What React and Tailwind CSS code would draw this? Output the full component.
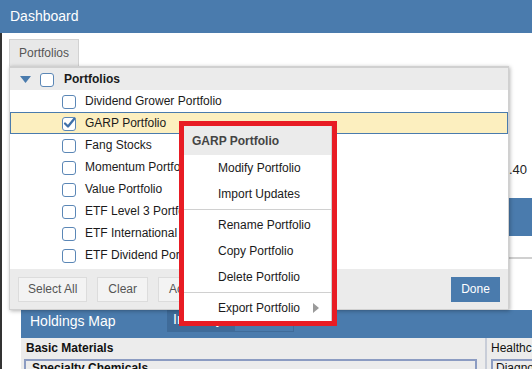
import React from "react";

const portfolios = [
  "Dividend Grower Portfolio",
  "GARP Portfolio",
  "Fang Stocks",
  "Momentum Portfolio",
  "Value Portfolio",
  "ETF Level 3 Portfolio",
  "ETF International Portfolio",
  "ETF Dividend Portfolio",
];

function Box({ checked }) {
  return (
    <svg width="15" height="15" viewBox="0 0 15 15" className="shrink-0">
      <rect x="0.5" y="1.5" width="13" height="13" rx="2.5" fill="#fff" stroke="#5b87b6" />
      {checked && (
        <path d="M3 7.5 L6 10.5 L12.5 2.5" fill="none" stroke="#3f70a8" strokeWidth="2.3" strokeLinecap="round" strokeLinejoin="round" />
      )}
    </svg>
  );
}

function MenuItem({ label, arrow }) {
  return (
    <div className="h-[26px] flex items-center pl-[34px] pr-[12px] text-[12px] text-[#1a1a1a]">
      <span className="flex-1">{label}</span>
      {arrow && (
        <svg width="6" height="10" viewBox="0 0 6 10">
          <polygon points="0,0 6,5 0,10" fill="#9a9a9a" />
        </svg>
      )}
    </div>
  );
}

export default function App() {
  return (
    <div className="relative w-[532px] h-[369px] overflow-hidden bg-white font-['Liberation_Sans',Arial,sans-serif]">
      {/* Header */}
      <div className="h-[33px] bg-[#4a7bad] flex items-center px-[10px] text-white text-[14px]">
        Dashboard
      </div>

      <div className="border-l-2 border-[#333]">
        {/* Tab */}
        <div className="pt-[6px] pl-[7px]">
          <div className="w-[70px] h-[27px] bg-[#e8e8e8] border border-b-0 border-[#d2d2d2] flex items-center justify-center text-[12px] text-[#555]">
            Portfolios
          </div>
        </div>

        {/* Background dashboard */}
        <div className="pl-[19px]">
          <div className="h-[132px] pt-[97px] pr-[5px] text-right text-[13px] leading-[14px] text-[#222]">
            12.40
          </div>
          <div className="h-[38px] bg-[#4a7bad]" />
          <div className="h-[23px] border-b-2 border-[#d0d0d0]" />
          <div className="h-[51px]" />

          {/* Holdings Map */}
          <div className="h-[28px] bg-[#4a7bad] flex items-start">
            <div className="w-[146px] shrink-0 pl-[9px] pt-[3px] leading-[16px] text-white text-[14px] whitespace-nowrap">
              Holdings Map
            </div>
            <div className="w-[67px] shrink-0 h-[22px] bg-[#3f6b99] pl-[6px] pt-[1px] leading-[16px] text-white text-[14px] whitespace-nowrap overflow-hidden">
              Industry
            </div>
            <div className="w-[60px] shrink-0 h-[22px] border border-[#3f6b99]" />
          </div>
          <div className="h-[31px] bg-[#ececec] flex">
            <div className="w-[466px] shrink-0 pl-[5px] pt-[3px] border-r-2 border-[#c8cdd8]">
              <div className="text-[12px] font-bold text-[#111] leading-[15px] whitespace-nowrap">Basic Materials</div>
              <div className="mt-[3px] mr-[8px] ml-[-2px] h-[20px] border-2 border-[#8c9cc2] pl-[6px] text-[12px] font-bold text-[#111] leading-[14px] whitespace-nowrap">
                Specialty Chemicals
              </div>
            </div>
            <div className="flex-1 min-w-0 overflow-hidden pl-[4px] pt-[3px]">
              <div className="text-[12px] text-[#111] leading-[15px] whitespace-nowrap">Healthcare</div>
              <div className="mt-[3px] h-[20px] border-2 border-r-0 border-[#8c9cc2] pl-[3px] text-[12px] text-[#111] leading-[14px] whitespace-nowrap">
                Diagnostics
              </div>
            </div>
          </div>
        </div>
      </div>

      {/* Portfolio dropdown */}
      <div className="absolute left-[9px] top-[66px] w-[500px] h-[244px] bg-white border border-[#d0d0d0] border-t-[2px] shadow-[1px_1px_4px_rgba(0,0,0,0.3)] flex flex-col">
        <div className="h-[22px] bg-[#ebebeb] flex items-center pl-[10px] gap-[9px]">
          <svg width="11" height="7" viewBox="0 0 11 7">
            <polygon points="0,0 11,0 5.5,7" fill="#4a7bad" />
          </svg>
          <Box />
          <span className="text-[12px] font-bold text-[#1a1a1a]">Portfolios</span>
        </div>
        <div className="flex-1">
          {portfolios.map((name, i) => (
            <div
              key={name}
              className={
                i === 1
                  ? "h-[22px] flex items-center pl-[51px] gap-[8px] bg-[#fcefbf] border border-[#4a7bad]"
                  : "h-[22px] flex items-center pl-[52px] gap-[8px]"
              }
            >
              <Box checked={i === 1} />
              <span className="text-[12px] text-[#1a1a1a]">{name}</span>
            </div>
          ))}
        </div>
        <div className="h-[40px] bg-[#ebebeb] flex items-center px-[8px] gap-[10px]">
          <button className="h-[25px] px-[9px] bg-[#f3f3f3] border border-[#dcdcdc] text-[12px] text-[#555]">Select All</button>
          <button className="h-[25px] px-[10px] bg-[#f3f3f3] border border-[#dcdcdc] text-[12px] text-[#555]">Clear</button>
          <button className="h-[25px] px-[10px] bg-[#f3f3f3] border border-[#dcdcdc] text-[12px] text-[#555]">Actions</button>
          <div className="flex-1" />
          <button className="h-[25px] w-[49px] bg-[#4a7bad] text-[12px] text-white">Done</button>
        </div>
      </div>

      {/* Context menu */}
      <div className="absolute left-[179px] top-[121px] w-[158px] border-[5px] border-[#e81c24]">
        <div className="bg-white border-r border-[#cfcfcf]">
          <div className="h-[29px] bg-[#ebebeb] flex items-center pl-[8px] text-[12px] font-bold text-[#444]">
            GARP Portfolio
          </div>
          <MenuItem label="Modify Portfolio" />
          <MenuItem label="Import Updates" />
          <div className="py-[2px]"><div className="h-px bg-[#d0d0d0]" /></div>
          <MenuItem label="Rename Portfolio" />
          <MenuItem label="Copy Portfolio" />
          <MenuItem label="Delete Portfolio" />
          <div className="py-[2px]"><div className="h-px bg-[#d0d0d0]" /></div>
          <MenuItem label="Export Portfolio" arrow />
        </div>
      </div>
    </div>
  );
}
